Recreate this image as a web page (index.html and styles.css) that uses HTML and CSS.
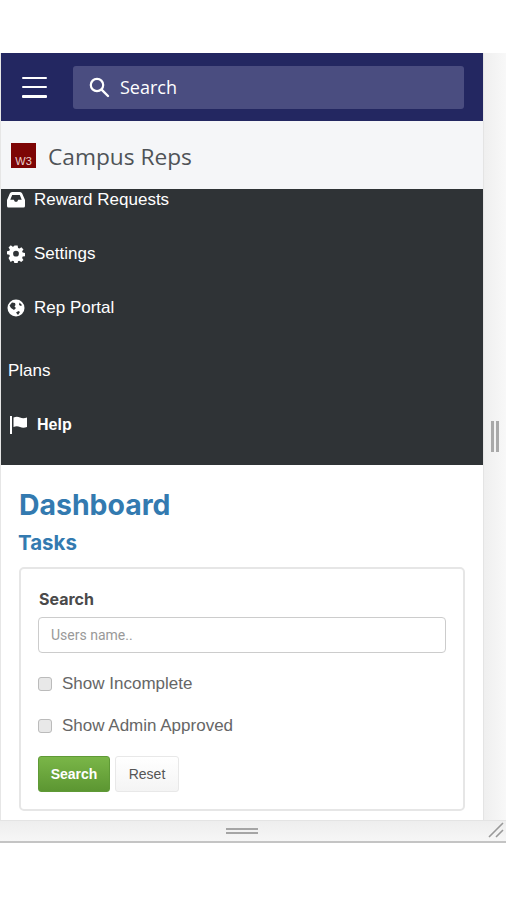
FILE: index.html
```html
<!DOCTYPE html>
<html lang="en">
<head>
  <meta charset="UTF-8">
  <title>Campus Reps</title>
  <link rel="stylesheet" href="styles.css">
</head>
<body>

<div class="frame">
  <div class="frame-top">
    <div class="page">
      <header class="topbar">
        <button class="burger" aria-label="Menu"><span></span><span></span><span></span></button>
        <div class="topsearch">
          <svg class="topsearch-icon" viewBox="0 0 22 22" width="22" height="22"><circle cx="9" cy="9" r="6.2" fill="none" stroke="#fff" stroke-width="2.2"/><path d="M13.6 13.6 L20 20" stroke="#fff" stroke-width="2.4" stroke-linecap="round"/></svg>
          <span>Search</span>
        </div>
      </header>

      <div class="brand">
        <div class="logo"><span>W3</span></div>
        <span class="brand-name">Campus Reps</span>
      </div>

      <nav class="menu">
        <ul>
          <li>
            <svg viewBox="0 0 18 16" width="18" height="16"><path fill="#fff" d="M5 0h8q1.500 0 2.200 1.500L18 8v6a1.500 1.500 0 0 1-1.500 1.500h-15A1.500 1.500 0 0 1 0 14V8l2.800-6.500Q3.500 0 5 0zM5.200 3 3.300 7.800h3.500l1.100 2h2.200l1.100-2h3.500L12.800 3z"/></svg>
            Reward Requests
          </li>
          <li>
            <svg viewBox="0 0 18 18" width="18" height="18"><path fill="#fff" fill-rule="evenodd" d="M7.200 0h3.600l.5 2.600 1.500.6 2.200-1.500 2.300 2.500-1.500 2.100.6 1.500 2.600.5v3.400l-2.600.5-.6 1.500 1.500 2.200-2.500 2.300-2.100-1.500-1.500.6-.5 2.600H7.200l-.5-2.600-1.500-.6-2.200 1.500L.7 13.700l1.500-2.100-.6-1.500L-1 9.600V6.200l2.600-.5.6-1.500L.7 2 3.200-.3l2.100 1.500L6.800.6zM9 5.800a3.200 3.200 0 1 0 0 6.400 3.200 3.200 0 0 0 0-6.400z" transform="translate(.9 .6) scale(.9)"/></svg>
            Settings
          </li>
          <li>
            <svg viewBox="0 0 18 18" width="18" height="18"><circle cx="9" cy="9" r="8.500" fill="#fff"/><path fill="#2f3336" d="M2.500 6.500 5 3.500l3 .5 .5 2-1 1.500 1.500 1.500L7 11 4 9zM9 13.500l2.500-1.500 1.500 1-2 3zM12.500 3.500 15 6l-1 1-2-1z"/></svg>
            Rep Portal
          </li>
          <li class="plain">Plans</li>
          <li class="help">
            <svg viewBox="0 0 18 18" width="18" height="18"><path fill="#fff" d="M0 0h2v18H0zM3.500 1.500c2.500-1.200 4.500-1 6.500 0s4.500 1 7 0V11c-2.500 1-5 1-7 0s-4-1.200-6.500 0z"/></svg>
            <strong>Help</strong>
          </li>
        </ul>
      </nav>

      <main class="content">
        <h1>Dashboard</h1>
        <h2>Tasks</h2>
        <form class="panel">
          <label class="field-label" for="users">Search</label>
          <input class="field" id="users" type="text" placeholder="Users name..">
          <label class="check"><input type="checkbox"> Show Incomplete</label>
          <label class="check"><input type="checkbox"> Show Admin Approved</label>
          <div class="actions">
            <button type="button" class="btn btn-search">Search</button>
            <button type="button" class="btn btn-reset">Reset</button>
          </div>
        </form>
      </main>
    </div>
    <div class="gutter-right"><span></span><span></span></div>
  </div>
  <div class="gutter-bottom">
    <div class="grip"><span></span><span></span></div>
    <svg class="resize" viewBox="0 0 16 16" width="16" height="16"><path d="M1 15 15 1M8 15l7-7" stroke="#999" stroke-width="1.600" fill="none"/></svg>
  </div>
</div>

</body>
</html>
```

FILE: styles.css
```css
* {
  box-sizing: border-box;
}
body {
  margin: 0;
  background: #fff;
  font-family: "Liberation Sans", Arial, sans-serif;
  color: #555;
}
.frame {
  margin-top: 53px;
  height: 790px;
  border-bottom: 2px solid #c4c4c4;
  display: flex;
  flex-direction: column;
  overflow: hidden;
}
.frame-top {
  display: flex;
  height: 767px;
}
.page {
  width: 484px;
  height: 767px;
  overflow: hidden;
  background: #fff;
  border-left: 1px solid #e6e6e6;
  border-right: 1px solid #e4e4e4;
}

.topbar {
  height: 68px;
  background: #232761;
  display: flex;
  align-items: center;
  padding: 0 19px 0 21px;
}
.burger {
  width: 25px;
  height: 21px;
  margin-right: 26px;
  padding: 0;
  border: none;
  background: none;
  display: flex;
  flex-direction: column;
  justify-content: space-between;
}
.burger span {
  display: block;
  height: 2.5px;
  background: #fff;
  border-radius: 1px;
}
.topsearch {
  flex: 1;
  height: 43px;
  background: #4a4d80;
  border-radius: 3px;
  display: flex;
  align-items: center;
  padding-left: 15px;
  color: #fff;
  font-family: "Open Sans", sans-serif;
  font-size: 18px;
}
.topsearch-icon {
  margin-right: 10px;
}

.brand {
  height: 68px;
  background: #f5f6f8;
  display: flex;
  align-items: center;
  padding-left: 10px;
}
.logo {
  width: 25px;
  height: 25px;
  background: #7d0505;
  display: flex;
  align-items: flex-end;
  justify-content: center;
  margin-right: 12px;
}
.logo span {
  color: #e9d0d0;
  font-size: 11px;
  line-height: 13px;
}
.brand-name {
  padding-top: 2px;
  font-family: "Open Sans", sans-serif;
  font-size: 22.7px;
  color: #4f5357;
}

.menu {
  height: 276px;
  background: #2f3336;
  overflow: hidden;
  color: #fff;
  font-size: 17px;
}
.menu ul {
  list-style: none;
  margin: -16px 0 0;
  padding: 0;
}
.menu li {
  height: 54px;
  display: flex;
  align-items: center;
  gap: 9px;
  padding-left: 6px;
}
.menu li.plain {
  height: 63px;
  padding-left: 7px;
  padding-top: 8px;
}
.menu li.help {
  padding-left: 9px;
  font-size: 16px;
}

.content {
  padding: 21px 18px 0;
}
h1 {
  margin: 0;
  font-family: Inter, sans-serif;
  font-size: 28.4px;
  line-height: 38px;
  font-weight: 700;
  color: #337ab0;
}
h2 {
  margin: 4px 0 0 -1px;
  font-family: Inter, sans-serif;
  font-size: 20.5px;
  line-height: 30px;
  font-weight: 700;
  color: #337ab0;
}
.panel {
  margin-top: 9px;
  height: 244px;
  border: 2px solid #e6e6e6;
  border-radius: 5px;
  padding: 20px 17px 0;
}
.field-label {
  display: block;
  margin-left: 1px;
  font-family: Inter, sans-serif;
  font-size: 16px;
  line-height: 20px;
  font-weight: 700;
  color: #4a4a4a;
}
.field {
  display: block;
  width: 100%;
  height: 36px;
  margin-top: 8px;
  padding: 0 12px;
  border: 1px solid #ccc;
  border-radius: 4px;
  font-family: Roboto, sans-serif;
  font-size: 14px;
}
.field::placeholder {
  color: #999;
}
.check {
  display: flex;
  align-items: center;
  gap: 10px;
  height: 20px;
  margin-top: 21px;
  font-size: 17px;
  color: #666;
}
.check + .check {
  margin-top: 22px;
}
.check input {
  appearance: none;
  width: 14px;
  height: 14px;
  margin: 0;
  background: #e8e8e8;
  border: 1px solid #bbb;
  border-radius: 3px;
}
.actions {
  display: flex;
  gap: 5px;
  margin-top: 20px;
}
.btn {
  height: 36px;
  border-radius: 3px;
  font-family: "Liberation Sans", Arial, sans-serif;
  font-size: 14px;
  padding: 0;
}
.btn-search {
  width: 72px;
  border: 1px solid #5f9a36;
  background: linear-gradient(#7ab648, #5c9632);
  color: #fff;
  font-weight: 700;
}
.btn-reset {
  width: 64px;
  border: 1px solid #e8e8e8;
  background: linear-gradient(#fff, #f4f4f4);
  color: #555;
}

.gutter-right {
  flex: 1;
  background: linear-gradient(90deg, #efefef, #f8f8f8);
  display: flex;
  align-items: center;
  justify-content: center;
  gap: 2px;
  padding-right: 1px;
}
.gutter-right span {
  width: 3px;
  height: 31px;
  background: #a9a9a9;
}
.gutter-bottom {
  flex: 1;
  position: relative;
  background: linear-gradient(#eeeeee, #f6f6f6);
  border-top: 1px solid #e4e4e4;
  padding-right: 22px;
  display: flex;
  align-items: center;
  justify-content: center;
}
.grip {
  display: flex;
  flex-direction: column;
  gap: 2px;
}
.grip span {
  display: block;
  width: 32px;
  height: 2px;
  background: #a5a5a5;
}
.resize {
  position: absolute;
  right: 2px;
  bottom: 3px;
}
```
